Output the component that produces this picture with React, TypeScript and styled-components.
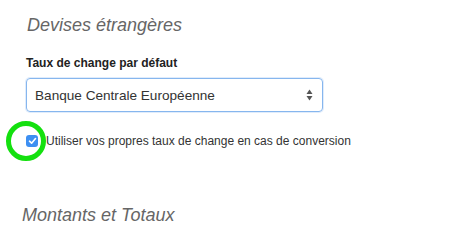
import React from 'react'
import styled, { createGlobalStyle } from 'styled-components'

const GlobalStyle = createGlobalStyle`
  html, body {
    margin: 0;
    padding: 0;
    background: #fff;
  }
  body {
    font-family: "Liberation Sans", Arial, sans-serif;
    color: #333;
  }
`

const Page = styled.div`
  width: 475px;
  height: 237px;
  overflow: hidden;
  padding: 15px 0 0 0;
  box-sizing: border-box;
`

interface SectionProps {
  indent: number
}

const Section = styled.section<SectionProps>`
  padding-left: ${props => props.indent}px;
`

const Heading = styled.h2`
  margin: 0;
  font-size: 18px;
  line-height: 20px;
  font-weight: normal;
  font-style: italic;
  color: #666;
`

const Field = styled.div`
  margin-top: 21px;
  width: 297px;
`

const Label = styled.label`
  display: block;
  font-size: 12px;
  line-height: 14px;
  font-weight: bold;
  color: #222;
  margin-bottom: 8px;
`

const SelectBox = styled.div`
  position: relative;
  height: 34px;
  box-sizing: border-box;
  border: 1px solid #86b6ee;
  border-radius: 4px;
  box-shadow: 0 0 0 1px rgba(130, 180, 240, 0.25);
  display: flex;
  align-items: center;
  padding: 0 8px;
  font-size: 13.6px;
  color: #333;
`

const SelectText = styled.span`
  flex: 1;
`

const Arrows = styled.svg`
  width: 7px;
  height: 12px;
  margin-right: 1px;
`

const CheckRow = styled.div`
  position: relative;
  display: flex;
  align-items: center;
  margin-top: 21px;
  font-size: 12px;
  line-height: 16px;
  color: #333;
`

const Check = styled.span`
  width: 12px;
  height: 12px;
  border-radius: 3px;
  background: #3d8ff2;
  display: flex;
  align-items: center;
  justify-content: center;
  margin-right: 8px;
`

const Ring = styled.span`
  position: absolute;
  left: -20px;
  top: -12px;
  width: 30px;
  height: 30px;
  border: 5px solid #14e00f;
  border-radius: 50%;
`

const SecondSection = styled(Section)`
  margin-top: 56px;
`

export default function App() {
  return (
    <Page>
      <GlobalStyle />
      <Section indent={27}>
        <Heading>Devises étrangères</Heading>
      </Section>
      <Section indent={26}>
        <Field>
          <Label>Taux de change par défaut</Label>
          <SelectBox>
            <SelectText>Banque Centrale Européenne</SelectText>
            <Arrows viewBox="0 0 7 12">
              <path d="M3.5 0.5 L6.5 5 L0.5 5 Z" fill="#555" />
              <path d="M3.5 11.5 L6.5 7 L0.5 7 Z" fill="#555" />
            </Arrows>
          </SelectBox>
        </Field>
        <CheckRow>
          <Ring />
          <Check>
            <svg width="9" height="8" viewBox="0 0 9 8">
              <path d="M1.5 4.2 L3.6 6.2 L7.5 1.5" stroke="#fff" strokeWidth="1.6" fill="none" strokeLinecap="round" strokeLinejoin="round" />
            </svg>
          </Check>
          Utiliser vos propres taux de change en cas de conversion
        </CheckRow>
      </Section>
      <SecondSection indent={22}>
        <Heading>Montants et Totaux</Heading>
      </SecondSection>
    </Page>
  )
}
